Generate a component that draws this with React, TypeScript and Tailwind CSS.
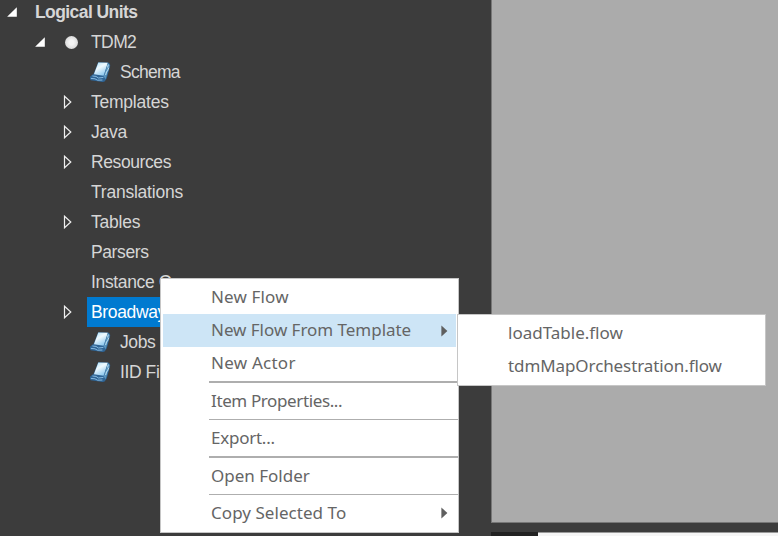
import { useId } from "react";

function Expanded() {
  return (
    <svg width="11" height="11" viewBox="0 0 11 11" className="shrink-0">
      <path d="M9.8 0.2V9.8H0.1Z" fill="#fff" />
    </svg>
  );
}

function Collapsed() {
  return (
    <svg width="10" height="14" viewBox="0 0 10 14" className="shrink-0">
      <path d="M1.5 1.2V12.8L7.8 7Z" fill="none" stroke="#efefef" strokeWidth="1.2" />
    </svg>
  );
}

function Book() {
  const id = useId();
  return (
    <svg width="22" height="22" viewBox="0 0 22 22" className="shrink-0">
      <defs>
        <linearGradient id={id} x1="0" y1="0" x2="0.6" y2="1">
          <stop offset="0" stopColor="#a5dcf8" />
          <stop offset="0.45" stopColor="#effaff" />
          <stop offset="1" stopColor="#8cc8ee" />
        </linearGradient>
      </defs>
      <path d="M9.2 1.2L19.3 1.4Q21.8 2.8 21 5.8L18.6 14.5Q17.8 18.3 15.6 20.6L13.6 21L1.6 19.2Q0 17.4 1.4 15.3L4.6 12.8Z" fill="#2f6596" />
      <path d="M9.3 1.5L18.8 1.8L14.6 14.8L4.9 13.2Z" fill={`url(#${id})`} />
      <path d="M18.9 2.2L20.7 4.2L16.6 18.2L14.8 15.4Z" fill="#5b96be" />
      <path d="M19.3 3.6L18.6 6.4M19.8 6.6L18.4 10.4M17.8 10.2L16.6 14" stroke="#c4e7f7" strokeWidth="0.9" />
      <path d="M3.4 15L7 15.4L9.4 17L14.4 16.4M1.9 17.4L6 17.8L8.5 19.2L13.4 19" fill="none" stroke="#86b9df" strokeWidth="1" />
    </svg>
  );
}

function TreeItem({ label, arrow, selected, tracking = "tracking-[-0.23px]" }: { label: string; arrow?: boolean; selected?: boolean; tracking?: string }) {
  return (
    <div className="flex h-[30px] items-center pl-[63px]">
      <span className="flex w-[24px]">{arrow && <Collapsed />}</span>
      <span className={`flex h-[30px] items-center pl-1 pr-1 pt-px ${selected ? "bg-[#007ad0] text-white" : ""} ${tracking}`}>{label}</span>
    </div>
  );
}

function FileItem({ label, tracking = "tracking-[-0.4px]" }: { label: string; tracking?: string }) {
  return (
    <div className="flex h-[30px] items-center pl-[89px]">
      <Book />
      <span className={`ml-[9px] pt-px ${tracking}`}>{label}</span>
    </div>
  );
}

function MenuItem({ label, arrow, active, tracking = "", height = "h-[33px]", nudge = "pb-0.5" }: { label: string; arrow?: boolean; active?: boolean; tracking?: string; height?: string; nudge?: string }) {
  return (
    <div className={`mx-[2px] flex items-center justify-between pl-12 pr-2 ${height} ${active ? "bg-[#cde5f6]" : ""}`}>
      <span className={`${nudge} ${tracking}`}>{label}</span>
      {arrow && (
        <svg width="7" height="12" viewBox="0 0 7 12">
          <path d="M0.4 0.5V11.5L6.4 6Z" fill="#5f5f5f" />
        </svg>
      )}
    </div>
  );
}

function Separator() {
  return <div className="ml-12 h-[1.5px] shrink-0 bg-[#aeaeae]" />;
}

export default function App() {
  return (
    <div className="relative flex h-[536px] w-[778px] overflow-hidden bg-[#3c3c3c] whitespace-nowrap">
      <div className="h-full w-[491px] shrink-0 font-['Liberation_Sans',Arial,sans-serif] text-[17.5px] leading-[29px] text-[#d6d6d6]">
        <div className="-mt-[3px] flex h-[30px] items-center pl-[7px] font-bold">
          <Expanded />
          <span className="ml-[17px] pt-px tracking-[-0.58px]">Logical Units</span>
        </div>
        <div className="flex h-[30px] items-center pl-[35px]">
          <Expanded />
          <span className="ml-[19px] size-[13px] rounded-full bg-[radial-gradient(circle,#f4f4f4_25%,#d2d2d2_85%)]" />
          <span className="ml-[13px] pt-px tracking-[-0.6px]">TDM2</span>
        </div>
        <FileItem label="Schema" tracking="tracking-[-0.75px]" />
        <TreeItem label="Templates" arrow />
        <TreeItem label="Java" arrow />
        <TreeItem label="Resources" arrow tracking="tracking-[-0.4px]" />
        <TreeItem label="Translations" />
        <TreeItem label="Tables" arrow />
        <TreeItem label="Parsers" tracking="tracking-[-0.4px]" />
        <TreeItem label="Instance Groups" tracking="tracking-[-0.35px]" />
        <TreeItem label="Broadway" arrow selected tracking="tracking-[-0.35px]" />
        <FileItem label="Jobs" />
        <FileItem label="IID Finder" />
      </div>
      <div className="flex flex-1 flex-col">
        <div className="h-[523px] border-b border-l border-[#777] bg-[#ababab]" />
        <div className="h-[9px]" />
        <div className="flex h-1">
          <div className="w-[47px] bg-[#222]" />
          <div className="flex-1 border-t border-[#999] bg-[#f5f5f5]" />
        </div>
      </div>

      <div className="absolute left-[160px] top-[278px] flex h-[255px] w-[299px] flex-col border border-[#c6c6c6] bg-white pt-[2px] font-['Noto_Sans','Open_Sans',sans-serif] text-[17px] leading-6 text-[#656565]">
        <MenuItem label="New Flow" tracking="tracking-[0.15px]" />
        <MenuItem label="New Flow From Template" arrow active tracking="tracking-[-0.03px]" />
        <MenuItem label="New Actor" tracking="tracking-[0.25px]" />
        <div className="h-px" />
        <Separator />
        <MenuItem label="Item Properties..." height="h-9" nudge="pb-0" tracking="tracking-[-0.38px]" />
        <Separator />
        <MenuItem label="Export..." height="h-9" nudge="pb-0" tracking="tracking-[-0.25px]" />
        <Separator />
        <MenuItem label="Open Folder" height="h-9" nudge="pb-0" />
        <Separator />
        <MenuItem label="Copy Selected To" arrow height="h-9" nudge="pb-0" tracking="tracking-[0.05px]" />
      </div>

      <div className="absolute left-[457px] top-[314px] h-[72px] w-[309px] border border-[#c6c6c6] bg-white pt-[2px] font-['Noto_Sans','Open_Sans',sans-serif] text-[17px] leading-6 text-[#656565]">
        <MenuItem label="loadTable.flow" />
        <MenuItem label="tdmMapOrchestration.flow" tracking="tracking-[-0.09px]" />
      </div>
    </div>
  );
}
